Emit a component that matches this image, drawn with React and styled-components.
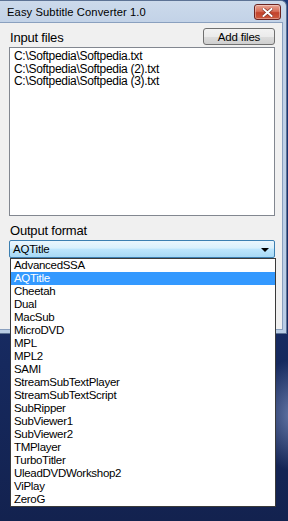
import React from "react";
import styled, { createGlobalStyle } from "styled-components";

const Global = createGlobalStyle`
  html, body { margin: 0; padding: 0; }
  body { width: 288px; height: 521px; overflow: hidden; font-family: "Liberation Sans", Arial, sans-serif; }
`;

const Desktop = styled.div`
  position: relative;
  width: 288px;
  height: 521px;
  overflow: hidden;
  background:
    radial-gradient(ellipse 50px 80px at 292px 415px, rgba(150,170,215,0.6), rgba(0,0,0,0) 70%),
    linear-gradient(180deg, #1d3a7a 0%, #1a3370 30%, #16295e 70%, #13224f 100%);
`;

const Window = styled.div`
  width: 287px;
  height: 334px;
  box-sizing: border-box;
  background: linear-gradient(180deg, #ccdaeb 0px, #c2d2e7 22px, #b9cde6 100%);
  border: 1px solid #5d7395;
  border-left: none;
  border-top-right-radius: 6px;
  display: flex;
  flex-direction: column;
  padding: 0 3px 3px 0;
`;

const TitleBar = styled.div`
  height: 21px;
  display: flex;
  align-items: center;
  justify-content: space-between;
  padding: 0 2px 0 7px;
`;

const Title = styled.span`
  font-family: "Liberation Sans", Arial, sans-serif;
  font-size: 11.2px;
  color: #000;
  letter-spacing: 0.1px;
`;

const CloseButton = styled.div`
  width: 25px;
  height: 14px;
  margin-top: 1px;
  border: 1px solid #6b2320;
  border-radius: 3px;
  background: linear-gradient(180deg, #e8a493 0%, #d86e58 45%, #c2422b 55%, #cd5a3f 100%);
  display: flex;
  align-items: center;
  justify-content: center;
  box-shadow: inset 0 0 0 1px rgba(255,255,255,0.35);
`;

const Body = styled.div`
  flex: 1;
  background: #f0f0f0;
  border: 1px solid #8aa0bf;
  border-left: none;
  display: flex;
  flex-direction: column;
  padding: 5px 7px 0 9px;
  font-size: 11px;
`;

const HeaderRow = styled.div`
  display: flex;
  justify-content: space-between;
  align-items: flex-end;
  height: 17px;
  margin-left: 1px;
`;

const Label = styled.span`
  font-family: "Liberation Sans", Arial, sans-serif;
  font-size: 13px;
  color: #000;
  line-height: 14px;
  letter-spacing: -0.2px;
`;

const Button = styled.div`
  width: 70px;
  height: 15px;
  border: 1px solid #707070;
  border-radius: 3px;
  background: linear-gradient(180deg, #f2f2f2 0%, #ebebeb 50%, #dddddd 51%, #cfcfcf 100%);
  display: flex;
  align-items: center;
  justify-content: center;
  font-size: 11.5px;
  letter-spacing: -0.2px;
  color: #000;
`;

const ListBox = styled.div`
  margin-top: 2px;
  height: 169px;
  box-sizing: border-box;
  background: #fff;
  border: 1px solid #828790;
  padding: 2px 4px;
`;

const Line = styled.div`
  height: 12.5px;
  line-height: 12.5px;
  font-size: 12px;
  letter-spacing: -0.3px;
  color: #000;
  white-space: nowrap;
`;

const OutputLabel = styled(Label)`
  margin-top: 8px;
  margin-left: 1px;
  height: 15px;
`;

const Combo = styled.div`
  margin-top: 1px;
  height: 18px;
  box-sizing: border-box;
  border: 1px solid #3c7fb1;
  border-radius: 2px;
  background: linear-gradient(180deg, #eaf6fd 0%, #d9f0fc 45%, #bee6fd 50%, #a7d9f5 100%);
  display: flex;
  align-items: center;
  justify-content: space-between;
  padding: 0 5px 0 3px;
  font-size: 11.5px;
  letter-spacing: -0.2px;
  color: #000;
`;

const Arrow = styled.span`
  width: 0;
  height: 0;
  border-left: 4px solid transparent;
  border-right: 4px solid transparent;
  border-top: 4px solid #000;
  margin-top: 1px;
`;

const Dropdown = styled.div`
  position: absolute;
  left: 10px;
  top: 258px;
  width: 266px;
  box-sizing: border-box;
  background: #fff;
  border: 1px solid #3a3a3a;
  display: flex;
  flex-direction: column;
`;

const Option = styled.div`
  height: 13px;
  line-height: 13px;
  padding-left: 3px;
  font-size: 11.5px;
  letter-spacing: -0.3px;
  color: ${p => (p.$selected ? "#fff" : "#000")};
  background: ${p => (p.$selected ? "#3399ff" : "transparent")};
  white-space: nowrap;
`;

const files = [
  "C:\\Softpedia\\Softpedia.txt",
  "C:\\Softpedia\\Softpedia (2).txt",
  "C:\\Softpedia\\Softpedia (3).txt",
];

const formats = [
  "AdvancedSSA", "AQTitle", "Cheetah", "Dual", "MacSub", "MicroDVD", "MPL", "MPL2",
  "SAMI", "StreamSubTextPlayer", "StreamSubTextScript", "SubRipper", "SubViewer1",
  "SubViewer2", "TMPlayer", "TurboTitler", "UleadDVDWorkshop2", "ViPlay", "ZeroG",
];

export default function App() {
  return (
    <>
      <Global />
      <Desktop>
        <Window>
          <TitleBar>
            <Title>Easy Subtitle Converter 1.0</Title>
            <CloseButton>
              <svg width="11" height="9" viewBox="0 0 11 9">
                <path d="M1.5 1 L9.5 8 M9.5 1 L1.5 8" stroke="#7a2a1e" strokeWidth="3.2" strokeLinecap="square" />
                <path d="M1.5 1 L9.5 8 M9.5 1 L1.5 8" stroke="#fff" strokeWidth="2" strokeLinecap="square" />
              </svg>
            </CloseButton>
          </TitleBar>
          <Body>
            <HeaderRow>
              <Label>Input files</Label>
              <Button>Add files</Button>
            </HeaderRow>
            <ListBox>
              {files.map(f => <Line key={f}>{f}</Line>)}
            </ListBox>
            <OutputLabel>Output format</OutputLabel>
            <Combo>
              <span>AQTitle</span>
              <Arrow />
            </Combo>
          </Body>
        </Window>
        <Dropdown>
          {formats.map(f => (
            <Option key={f} $selected={f === "AQTitle"}>{f}</Option>
          ))}
        </Dropdown>
      </Desktop>
    </>
  );
}
